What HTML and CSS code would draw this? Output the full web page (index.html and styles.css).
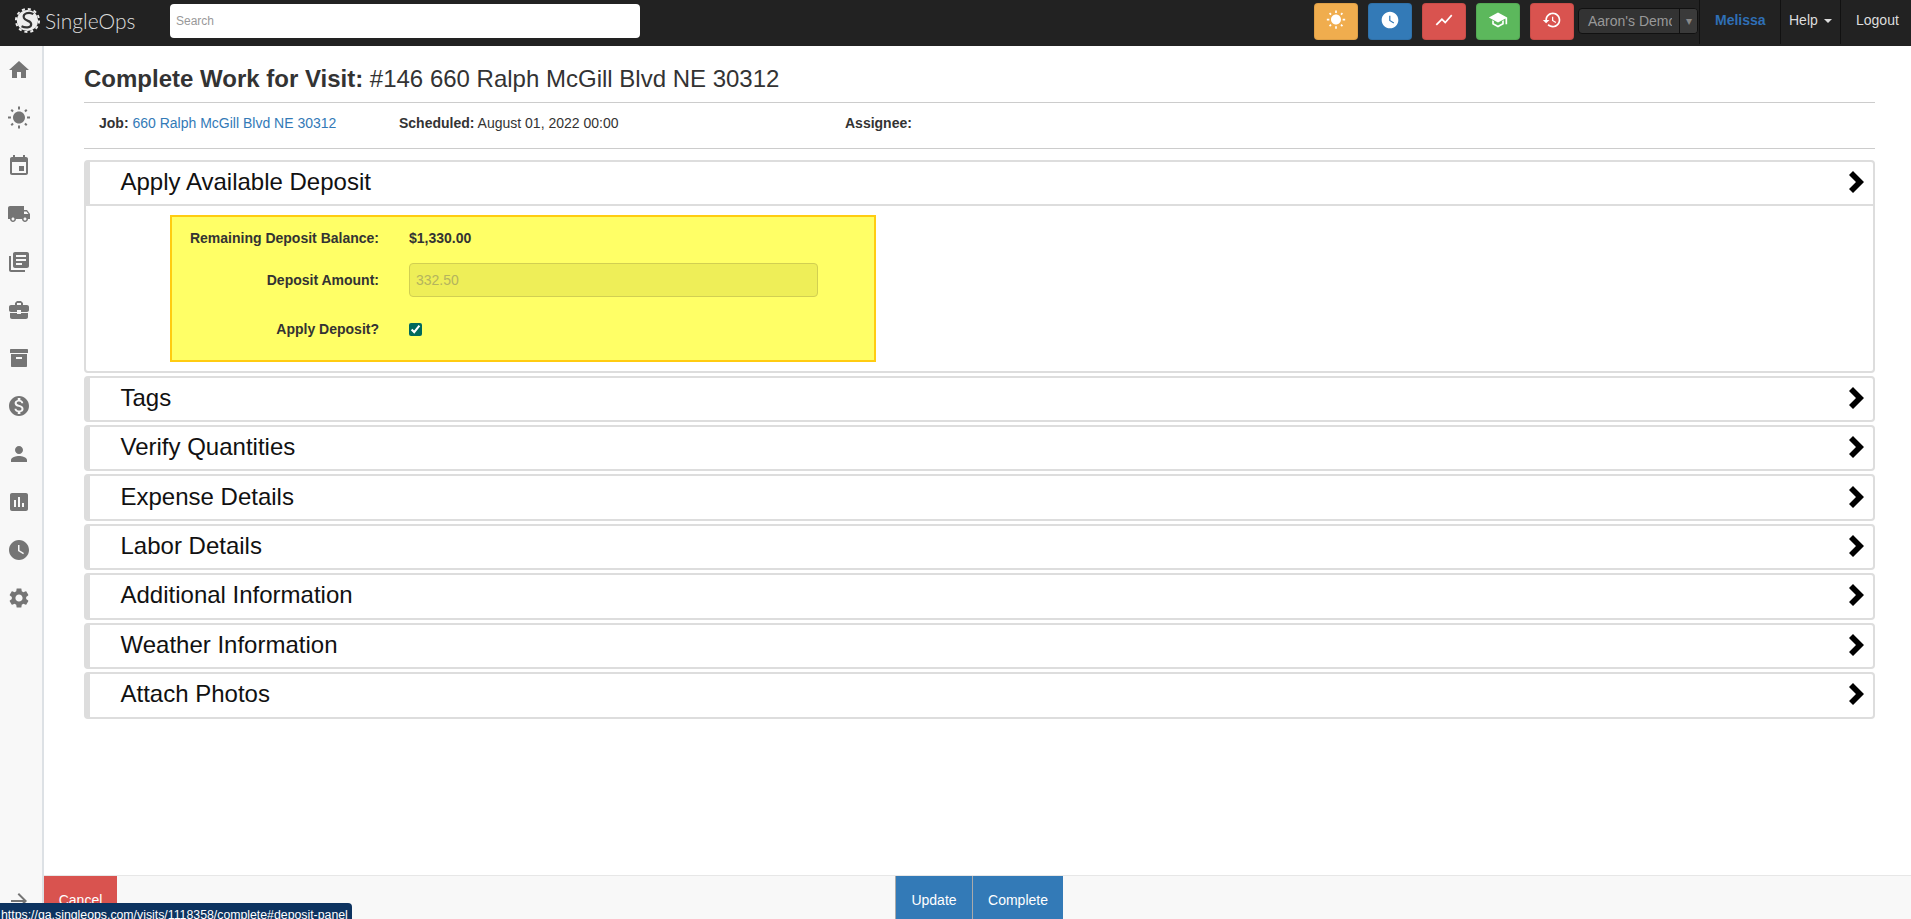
FILE: index.html
```html
<!DOCTYPE html>
<html lang="en">
<head>
<meta charset="utf-8">
<title>Complete Work for Visit</title>
<link rel="stylesheet" href="styles.css">
</head>
<body>
<header class="navbar">
  <a class="brand">
    <svg class="brand-mark" viewBox="0 0 28 28"><circle cx="14" cy="14" r="11" fill="#eee"/><circle cx="14" cy="14" r="12" fill="none" stroke="#eee" stroke-width="2" stroke-dasharray="3.2 3.08"/><path d="M20 7.500C16 4.500 8.500 6.500 10.300 11.300 12 15.500 18 13.500 17.800 18.200 17.500 21.500 12 22 7.800 20" fill="none" stroke="#333" stroke-width="2.300"/></svg>
    <span class="brand-name">SingleOps</span>
  </a>
  <input class="search" type="text" placeholder="Search">
  <div class="nav-right">
    <a class="tile tile-orange"><svg viewBox="0 0 24 24"><path d="M6.760 4.840l-1.800-1.790-1.410 1.410 1.790 1.790 1.420-1.410zM4 10.500H1v2h3v-2zm9-9.950h-2V3.500h2V.55zm7.450 3.910l-1.410-1.410-1.790 1.790 1.410 1.410 1.790-1.790zm-3.210 13.700l1.790 1.800 1.410-1.410-1.800-1.790-1.400 1.400zM20 10.500v2h3v-2h-3zm-8-5c-3.310 0-6 2.690-6 6s2.690 6 6 6 6-2.690 6-6-2.690-6-6-6zm-1 16.950h2V19.500h-2v2.950zm-7.450-3.910l1.410 1.410 1.790-1.800-1.410-1.410-1.790 1.800z"/></svg></a>
    <a class="tile tile-blue"><svg viewBox="0 0 24 24"><path d="M12 2C6.500 2 2 6.500 2 12s4.500 10 10 10 10-4.500 10-10S17.500 2 12 2zm4.200 14.200L11 13V7h1.500v5.200l4.500 2.700-.8 1.300z"/></svg></a>
    <a class="tile tile-red"><svg viewBox="0 0 24 24"><path d="M3.500 18.490l6-6.010 4 4L22 6.920l-1.410-1.410-7.090 7.970-4-4L2 16.990z"/></svg></a>
    <a class="tile tile-green"><svg viewBox="0 0 24 24"><path d="M12 3L1 9l11 6 9-4.910V17h2V9L12 3z"/><path d="M5 12.200v5L12 21l7-3.820v-5l-2 1.100v2.700l-5 2.730-5-2.730v-2.700z"/></svg></a>
    <a class="tile tile-red"><svg viewBox="0 0 24 24"><path d="M13 3c-4.970 0-9 4.030-9 9H1l3.890 3.890.07.14L9 12H6c0-3.870 3.130-7 7-7s7 3.130 7 7-3.130 7-7 7c-1.930 0-3.680-.79-4.940-2.060l-1.420 1.420C8.270 19.990 10.510 21 13 21c4.970 0 9-4.030 9-9s-4.030-9-9-9zm-1 5v5l4.280 2.540.72-1.210-3.500-2.080V8H12z"/></svg></a>
    <div class="account">
      <span class="account-name">Aaron's Demo</span>
      <span class="account-arrow">▾</span>
    </div>
    <a class="nav-link nav-user">Melissa</a>
    <a class="nav-link nav-help">Help <i class="caret"></i></a>
    <a class="nav-link nav-logout">Logout</a>
  </div>
</header>

<div class="shell">
  <nav class="sidebar">
    <svg viewBox="0 0 24 24"><path d="M10 20v-6h4v6h5v-8h3L12 3 2 12h3v8z"/></svg>
    <svg viewBox="0 0 24 24"><path d="M6.760 4.840l-1.800-1.790-1.410 1.410 1.790 1.790 1.420-1.410zM4 10.500H1v2h3v-2zm9-9.950h-2V3.500h2V.55zm7.450 3.910l-1.410-1.410-1.790 1.790 1.410 1.410 1.790-1.790zm-3.210 13.700l1.790 1.800 1.410-1.410-1.800-1.790-1.400 1.400zM20 10.500v2h3v-2h-3zm-8-5c-3.310 0-6 2.690-6 6s2.690 6 6 6 6-2.690 6-6-2.690-6-6-6zm-1 16.950h2V19.500h-2v2.950zm-7.450-3.910l1.410 1.410 1.790-1.800-1.410-1.410-1.790 1.800z"/></svg>
    <svg viewBox="0 0 24 24"><path d="M17 12h-5v5h5v-5zM16 1v2H8V1H6v2H5c-1.110 0-1.990.9-1.990 2L3 19c0 1.100.89 2 2 2h14c1.100 0 2-.9 2-2V5c0-1.100-.9-2-2-2h-1V1h-2zm3 18H5V8h14v11z"/></svg>
    <svg viewBox="0 0 24 24"><path d="M20 8h-3V4H3c-1.100 0-2 .9-2 2v11h2c0 1.660 1.340 3 3 3s3-1.340 3-3h6c0 1.660 1.340 3 3 3s3-1.340 3-3h2v-5l-3-4zM6 18.500c-.83 0-1.500-.67-1.500-1.500s.67-1.500 1.500-1.500 1.500.67 1.500 1.500-.67 1.500-1.500 1.500zm13.500-9l1.960 2.500H17V9.500h2.500zm-1.500 9c-.83 0-1.500-.67-1.500-1.500s.67-1.500 1.500-1.500 1.500.67 1.500 1.500-.67 1.500-1.500 1.500z"/></svg>
    <svg viewBox="0 0 24 24"><path d="M4 6H2v14c0 1.100.9 2 2 2h14v-2H4V6zm16-4H8c-1.100 0-2 .9-2 2v12c0 1.100.9 2 2 2h12c1.100 0 2-.9 2-2V4c0-1.100-.9-2-2-2zm-1 9H9V9h10v2zm-4 4H9v-2h6v2zm4-8H9V5h10v2z"/></svg>
    <svg viewBox="0 0 24 24"><path d="M10 16v-1H3.010L3 19c0 1.110.89 2 2 2h14c1.110 0 2-.89 2-2v-4h-7v1h-4zm10-9h-4.010V5l-2-2h-4l-2 2v2H4c-1.100 0-2 .9-2 2v3c0 1.110.89 2 2 2h6v-2h4v2h6c1.100 0 2-.9 2-2V9c0-1.100-.9-2-2-2zm-6 0h-4V5h4v2z"/></svg>
    <svg viewBox="0 0 24 24"><path fill-rule="evenodd" d="M3 4c0-.6.400-1 1-1h16c.6 0 1 .4 1 1v3H3zM4 8h16v12c0 .6-.4 1-1 1H5c-.6 0-1-.4-1-1zm5 3v2h6v-2z"/></svg>
    <svg viewBox="0 0 24 24"><path d="M12 2C6.480 2 2 6.480 2 12s4.480 10 10 10 10-4.480 10-10S17.520 2 12 2zm1.410 16.090V20h-2.670v-1.930c-1.710-.36-3.160-1.460-3.270-3.400h1.960c.1 1.050.82 1.870 2.650 1.870 1.960 0 2.400-.98 2.400-1.590 0-.83-.44-1.610-2.670-2.140-2.480-.6-4.180-1.620-4.180-3.670 0-1.720 1.390-2.840 3.110-3.210V4h2.670v1.950c1.860.45 2.790 1.860 2.850 3.390H14.300c-.05-1.110-.64-1.870-2.220-1.870-1.500 0-2.400.68-2.400 1.640 0 .84.65 1.390 2.670 1.910s4.180 1.390 4.180 3.910c-.01 1.830-1.380 2.830-3.120 3.160z"/></svg>
    <svg viewBox="0 0 24 24"><path d="M12 12c2.210 0 4-1.790 4-4s-1.790-4-4-4-4 1.790-4 4 1.790 4 4 4zm0 2c-2.670 0-8 1.340-8 4v2h16v-2c0-2.660-5.330-4-8-4z"/></svg>
    <svg viewBox="0 0 24 24"><path d="M19 3H5c-1.100 0-2 .9-2 2v14c0 1.100.9 2 2 2h14c1.100 0 2-.9 2-2V5c0-1.100-.9-2-2-2zM9 17H7v-7h2v7zm4 0h-2V7h2v10zm4 0h-2v-4h2v4z"/></svg>
    <svg viewBox="0 0 24 24"><path d="M12 2C6.500 2 2 6.500 2 12s4.500 10 10 10 10-4.500 10-10S17.500 2 12 2zm4.200 14.200L11 13V7h1.500v5.200l4.500 2.700-.8 1.300z"/></svg>
    <svg viewBox="0 0 24 24"><path d="M19.140 12.940c.04-.3.06-.61.06-.94 0-.32-.02-.64-.07-.94l2.030-1.580c.18-.14.23-.41.12-.61l-1.920-3.320c-.12-.22-.37-.29-.59-.22l-2.390.96c-.5-.38-1.030-.7-1.620-.94l-.36-2.540c-.04-.24-.24-.41-.48-.41h-3.840c-.24 0-.43.17-.47.41l-.36 2.540c-.59.24-1.130.57-1.620.94l-2.390-.96c-.22-.08-.47 0-.59.22L2.740 8.870c-.12.21-.08.47.12.61l2.030 1.580c-.05.3-.09.63-.09.94s.02.64.07.94l-2.030 1.580c-.18.14-.23.41-.12.61l1.920 3.320c.12.22.37.29.59.22l2.390-.96c.5.38 1.030.7 1.620.94l.36 2.540c.05.24.24.41.48.41h3.840c.24 0 .44-.17.47-.41l.36-2.540c.59-.24 1.130-.56 1.620-.94l2.390.96c.22.08.47 0 .59-.22l1.920-3.320c.12-.22.07-.47-.12-.61l-2.010-1.580zM12 15.600c-1.980 0-3.600-1.620-3.600-3.600s1.620-3.600 3.600-3.600 3.600 1.620 3.600 3.600-1.620 3.600-3.600 3.600z"/></svg>
    <svg class="collapse-arrow" viewBox="0 0 24 24"><path d="M12 4l-1.410 1.410L16.170 11H4v2h12.170l-5.580 5.590L12 20l8-8z"/></svg>
  </nav>

  <div class="page">
    <main class="content">
      <h2 class="title"><b>Complete Work for Visit:</b> #146 660 Ralph McGill Blvd NE 30312</h2>
      <div class="meta">
        <div class="meta-job"><b>Job:</b> <a>660 Ralph McGill Blvd NE 30312</a></div>
        <div class="meta-sched"><b>Scheduled:</b> August 01, 2022 00:00</div>
        <div class="meta-assignee"><b>Assignee:</b></div>
      </div>

      <section class="panel panel-open">
        <div class="panel-head">
          <h3>Apply Available Deposit</h3>
          <svg class="chev" viewBox="0 0 15 22"><path d="M4 0l11 11-11 11-4-4 7-7-7-7z"/></svg>
        </div>
        <div class="panel-body">
          <div class="deposit">
            <div class="row row-balance"><label>Remaining Deposit Balance:</label><b>$1,330.00</b></div>
            <div class="row row-amount"><label>Deposit Amount:</label><input class="amount" type="text" value="332.50" disabled></div>
            <div class="row row-apply"><label>Apply Deposit?</label><input class="check" type="checkbox" checked></div>
          </div>
        </div>
      </section>

      <section class="panel"><div class="panel-head"><h3>Tags</h3><svg class="chev" viewBox="0 0 15 22"><path d="M4 0l11 11-11 11-4-4 7-7-7-7z"/></svg></div></section>
      <section class="panel"><div class="panel-head"><h3>Verify Quantities</h3><svg class="chev" viewBox="0 0 15 22"><path d="M4 0l11 11-11 11-4-4 7-7-7-7z"/></svg></div></section>
      <section class="panel"><div class="panel-head"><h3>Expense Details</h3><svg class="chev" viewBox="0 0 15 22"><path d="M4 0l11 11-11 11-4-4 7-7-7-7z"/></svg></div></section>
      <section class="panel"><div class="panel-head"><h3>Labor Details</h3><svg class="chev" viewBox="0 0 15 22"><path d="M4 0l11 11-11 11-4-4 7-7-7-7z"/></svg></div></section>
      <section class="panel"><div class="panel-head"><h3>Additional Information</h3><svg class="chev" viewBox="0 0 15 22"><path d="M4 0l11 11-11 11-4-4 7-7-7-7z"/></svg></div></section>
      <section class="panel"><div class="panel-head"><h3>Weather Information</h3><svg class="chev" viewBox="0 0 15 22"><path d="M4 0l11 11-11 11-4-4 7-7-7-7z"/></svg></div></section>
      <section class="panel"><div class="panel-head"><h3>Attach Photos</h3><svg class="chev" viewBox="0 0 15 22"><path d="M4 0l11 11-11 11-4-4 7-7-7-7z"/></svg></div></section>
    </main>

    <footer class="actions">
      <a class="btn btn-cancel">Cancel</a>
      <div class="actions-center">
        <a class="btn btn-primary btn-update">Update</a>
        <a class="btn btn-primary btn-complete">Complete</a>
      </div>
    </footer>
  </div>
</div>

<div class="status-url">https://qa.singleops.com/visits/1118358/complete#deposit-panel</div>
</body>
</html>
```
FILE: styles.css
```css
* { box-sizing: border-box; }
html, body { margin: 0; height: 100%; overflow: hidden; }
body {
  font-family: "Liberation Sans", Arial, sans-serif;
  font-size: 14px;
  color: #333;
  background: #fff;
  display: flex;
  flex-direction: column;
}
a { text-decoration: none; }

/* top bar */
.navbar {
  height: 46px;
  flex: none;
  background: #222;
  display: flex;
  align-items: flex-start;
  padding-left: 14px;
}
.brand { display: flex; align-items: center; height: 40px; color: #ddd; width: 156px; }
.brand-mark { width: 27px; height: 27px; flex: none; }
.brand-name { font-family: Lato, sans-serif; font-weight: 300; font-size: 21px; margin-left: 4px; }
.search {
  width: 470px;
  height: 34px;
  margin-top: 4px;
  border: 0;
  border-radius: 4px;
  background: #fff;
  padding: 0 6px;
  font: 12px "Liberation Sans", Arial, sans-serif;
}
.search::placeholder { color: #999; opacity: 1; }
.nav-right { margin-left: auto; display: flex; align-items: flex-start; height: 46px; }
.tile {
  width: 44px;
  height: 37px;
  margin: 3px 10px 0 0;
  border-radius: 4px;
  display: flex;
  align-items: center;
  justify-content: center;
  border: 1px solid rgba(0,0,0,.08);
}
.tile svg { width: 20px; height: 20px; fill: #fff; margin-top: -3px; }
.tile:nth-child(5) { margin-right: 4px; }
.tile-orange { background: #f0ad4e; }
.tile-blue { background: #337ab7; }
.tile-red { background: #d9534f; }
.tile-green { background: #5cb85c; }
.account {
  width: 120px;
  height: 26px;
  margin-top: 8px;
  background: #333;
  border: 1px solid #111;
  border-radius: 4px;
  display: flex;
  color: #999;
  font-size: 14px;
  line-height: 24px;
}
.account-name { width: 93px; padding-left: 9px; overflow: hidden; white-space: nowrap; margin-right: 7px; flex: none; }
.account-arrow { flex: 1; border-left: 1px solid #111; text-align: center; font-size: 12px; color: #888; background: #3a3a3a; border-radius: 0 3px 3px 0; }
.nav-link { height: 44px; line-height: 40px; font-size: 14px; color: #ddd; border-left: 1px solid #111; display: block; }
.nav-user { margin-left: 1px; width: 81px; padding-left: 15px; color: #2f6fb6; font-weight: bold; font-size: 14px; }
.nav-help { width: 60px; padding-left: 8px; }
.nav-logout { width: 71px; padding-left: 15px; }
.caret {
  display: inline-block;
  width: 0; height: 0;
  margin-left: 2px;
  vertical-align: middle;
  border-top: 4px solid #ddd;
  border-left: 4px solid transparent;
  border-right: 4px solid transparent;
}

/* shell */
.shell { flex: 1; min-height: 0; display: flex; }
.sidebar {
  width: 44px;
  flex: none;
  background: #f8f8f8;
  border-right: 2px solid #dde1e5;
  display: flex;
  flex-direction: column;
  align-items: center;
  padding: 12px 4px 0 0;
  gap: 24px;
}
.sidebar svg { width: 24px; height: 24px; fill: #757575; flex: none; }
.sidebar .collapse-arrow { margin-top: auto; margin-bottom: 6px; }
.page { flex: 1; min-width: 0; display: flex; flex-direction: column; }
.content { flex: 1; min-height: 0; padding: 0 36px 0 40px; }

/* heading */
.title {
  margin: 0;
  padding: 18px 0 8px;
  height: 57px;
  line-height: 30px;
  font-size: 24px;
  font-weight: normal;
  border-bottom: 1px solid #ccc;
}
.meta {
  height: 46px;
  border-bottom: 1px solid #ccc;
  display: flex;
  align-items: center;
  margin-bottom: 10.5px;
  padding: 0 0 5px 15px;
}
.meta a { color: #337ab7; }
.meta-job { width: 300px; }
.meta-sched { width: 446px; }

/* panels */
.panel {
  border: 2px solid #ddd;
  border-radius: 4px;
  margin-bottom: 3px;
  height: 46.45px;
}
.panel-open { height: 213px; }
.panel-head {
  height: 42.45px;
  border-left: 4px solid #ddd;
  display: flex;
  align-items: center;
  justify-content: space-between;
  padding: 0 9px 2px 30.5px;
}
.panel-open .panel-head { height: 44px; border-bottom: 2px solid #ddd; padding-bottom: 1px; }
.panel-head h3 { margin: 0; font-size: 24px; font-weight: normal; color: #111; }
.chev { width: 15px; height: 22px; fill: #000; }
.panel-body { padding: 9px 0 0 84px; }

/* deposit box */
.deposit {
  width: 706px;
  height: 147px;
  background: #ffff66;
  border: 2px solid #ffcc11;
  padding-top: 11px;
}
.row { display: flex; align-items: center; color: #333; }
.row label { width: 207px; text-align: right; font-weight: bold; margin-right: 30px; }
.row-balance { height: 20px; }
.row-amount { height: 34px; margin-top: 15px; }
.row-apply { height: 20px; margin-top: 22px; }
.amount {
  width: 409px;
  height: 34px;
  background: #eeee58;
  border: 1px solid #d1cf52;
  border-radius: 4px;
  padding: 0 6px;
  font: 14px "Liberation Sans", Arial, sans-serif;
  color: #b4b45e;
}
.check { width: 13px; height: 13px; margin: 1px 0 0; accent-color: #00695c; }

/* bottom bar */
.actions {
  height: 44px;
  flex: none;
  background: #f8f8f8;
  border-top: 1px solid #e7e7e7;
  display: flex;
}
.btn { display: flex; align-items: center; justify-content: center; color: #fff; font-size: 14px; padding-top: 5px; }
.btn-cancel { width: 73px; background: #d9534f; }
.actions-center { display: flex; margin-left: 778px; }
.btn-primary { background: #337ab7; border-left: 1px solid #aaa; }
.btn-update { width: 77px; }
.btn-complete { width: 91px; }

/* browser link-hover bubble */
.status-url {
  position: fixed;
  left: 0;
  bottom: 0;
  width: 352px;
  height: 16px;
  overflow: hidden;
  background: #0d3360;
  color: #fff;
  border-radius: 0 4px 0 0;
  font-size: 12.3px;
  line-height: 24px;
  white-space: nowrap;
  padding-left: 1px;
}
```
